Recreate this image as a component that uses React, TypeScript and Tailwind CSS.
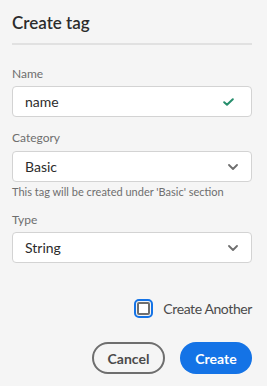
import { useState } from 'react';

function Chevron() {
  return (
    <svg width="10" height="6" viewBox="0 0 10 6" className="text-[#6e6e6e]">
      <path d="M1 1l4 4 4-4" fill="none" stroke="currentColor" strokeWidth="1.8" strokeLinecap="round" strokeLinejoin="round" />
    </svg>
  );
}

function SelectBox({ value }: { value: string }) {
  return (
    <div className="flex h-[31px] items-center justify-between rounded-[4px] border border-[#d3d3d3] bg-white pl-[12px] pr-[13px]">
      <span className="text-[14px] text-[#2c2c2c]">{value}</span>
      <Chevron />
    </div>
  );
}

export default function App() {
  const [another, setAnother] = useState(false);

  return (
    <div className="flex h-[386px] w-[267px] flex-col bg-[#f5f5f5] pl-[12px] pr-[15px] font-['Lato','Liberation_Sans',sans-serif] text-[#2c2c2c]">
      {/* Заголовок */}
      <h1 className="pt-[12px] text-[17px] font-semibold leading-[22px] text-[#2c2c2c]">Create tag</h1>
      <div className="mt-[9px] h-[2px] bg-[#e1e1e1]" />

      {/* Name */}
      <label className="mt-[21px] text-[12px] leading-[16px] text-[#6e6e6e]">Name</label>
      <div className="mt-[4px] flex h-[31px] items-center justify-between rounded-[4px] border border-[#d3d3d3] bg-white pl-[12px] pr-[17px]">
        <span className="text-[14px]">name</span>
        <svg width="11" height="8" viewBox="0 0 11 8">
          <path d="M1.2 4.2l2.8 2.6 5.8-5.6" fill="none" stroke="#268e6c" strokeWidth="2" strokeLinecap="round" strokeLinejoin="round" />
        </svg>
      </div>

      {/* Category */}
      <label className="mt-[13px] text-[12px] leading-[16px] text-[#6e6e6e]">Category</label>
      <div className="mt-[5px]">
        <SelectBox value="Basic" />
      </div>
      <p className="mt-[3px] text-[11px] leading-[14px] text-[#6e6e6e]">This tag will be created under 'Basic' section</p>

      {/* Type */}
      <label className="mt-[13px] text-[12px] leading-[16px] text-[#6e6e6e]">Type</label>
      <div className="mt-[4px]">
        <SelectBox value="String" />
      </div>

      {/* Create another */}
      <div className="mt-[36px] flex h-[19px] items-center justify-end gap-[10px]">
        <button
          onClick={() => setAnother(!another)}
          className="flex h-[19px] w-[19px] items-center justify-center rounded-[5px] border-2 border-[#1473e6]"
        >
          <span className="block h-[13px] w-[13px] rounded-[2px] border-2 border-[#6e6e6e] bg-white" />
        </button>
        <span className="text-[14px] leading-[19px] tracking-[-0.4px] text-[#4b4b4b]">Create Another</span>
      </div>

      {/* Кнопки */}
      <div className="mt-[24px] flex justify-end gap-[15px]">
        <button className="h-[32px] w-[73px] rounded-full border-2 border-[#6e6e6e] text-[14px] font-bold text-[#4b4b4b]">
          Cancel
        </button>
        <button className="h-[32px] w-[72px] rounded-full bg-[#1473e6] text-[14px] font-bold text-white">
          Create
        </button>
      </div>
    </div>
  );
}
